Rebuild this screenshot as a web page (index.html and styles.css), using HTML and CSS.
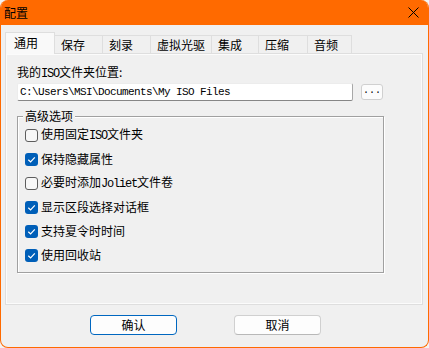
FILE: index.html
```html
<!DOCTYPE html>
<html lang="zh-CN">
<head>
<meta charset="utf-8">
<title>配置</title>
<link rel="stylesheet" href="styles.css">
</head>
<body>
<div class="window">
  <div class="titlebar">
    <span class="title">配置</span>
    <svg class="close" width="11" height="11" viewBox="0 0 11 11"><path d="M0.5 0.5 L10.5 10.5 M10.5 0.5 L0.5 10.5" stroke="#000" stroke-width="1" fill="none"/></svg>
  </div>
  <div class="tabs">
    <div class="tab active w50">通用</div>
    <div class="tab w47">保存</div>
    <div class="tab w48">刻录</div>
    <div class="tab w61">虚拟光驱</div>
    <div class="tab w47">集成</div>
    <div class="tab w49">压缩</div>
    <div class="tab w45 last">音频</div>
  </div>
  <div class="panel">
    <div class="label">我的<span class="lat">ISO</span>文件夹位置:</div>
    <div class="pathrow">
      <div class="input">C:\Users\MSI\Documents\My ISO Files</div>
      <div class="browse">...</div>
    </div>
    <div class="group">
      <div class="legend">高级选项</div>
      <div class="row"><span class="cb"></span><span>使用固定<span class="lat">ISO</span>文件夹</span></div>
      <div class="row"><span class="cb on"><svg width="13" height="13" viewBox="0 0 13 13"><path d="M3.3 6.8 L5.6 9 L9.8 4.4" stroke="#fff" stroke-width="1.2" fill="none"/></svg></span><span>保持隐藏属性</span></div>
      <div class="row"><span class="cb"></span><span>必要时添加<span class="lat">Joliet</span>文件卷</span></div>
      <div class="row"><span class="cb on"><svg width="13" height="13" viewBox="0 0 13 13"><path d="M3.3 6.8 L5.6 9 L9.8 4.4" stroke="#fff" stroke-width="1.2" fill="none"/></svg></span><span>显示区段选择对话框</span></div>
      <div class="row"><span class="cb on"><svg width="13" height="13" viewBox="0 0 13 13"><path d="M3.3 6.8 L5.6 9 L9.8 4.4" stroke="#fff" stroke-width="1.2" fill="none"/></svg></span><span>支持夏令时时间</span></div>
      <div class="row"><span class="cb on"><svg width="13" height="13" viewBox="0 0 13 13"><path d="M3.3 6.8 L5.6 9 L9.8 4.4" stroke="#fff" stroke-width="1.2" fill="none"/></svg></span><span>使用回收站</span></div>
    </div>
  </div>
  <div class="buttons">
    <div class="btn primary">确认</div>
    <div class="btn">取消</div>
  </div>
</div>
</body>
</html>
```
FILE: styles.css
```css
* { box-sizing: border-box; }
html, body {
  margin: 0;
  padding: 0;
  background: #f3f3f3;
}
body {
  font-family: "Noto Sans CJK SC", "Noto Sans", sans-serif;
  font-size: 12px;
  color: #000;
}
.window {
  width: 429px;
  height: 348px;
  background: #f0f0f0;
  border: 1px solid #ff6a00;
  border-top: none;
  border-radius: 8px;
  overflow: hidden;
  display: flex;
  flex-direction: column;
}
.titlebar {
  height: 25px;
  background: #ff6a00;
  display: flex;
  align-items: center;
  justify-content: space-between;
  padding: 0 10px 0 4px;
  margin: 0 -1px;
}
.title {
  line-height: 16px;
}
.close { display: block; }
.tabs {
  height: 28px;
  display: flex;
  align-items: flex-end;
  padding-left: 4px;
}
.tab {
  height: 18px;
  border: 1px solid #dedede;
  border-bottom: none;
  border-right: none;
  background: #f0f0f0;
  line-height: 16px;
  padding: 1px 0 0 6px;
}
.tab.last { border-right: 1px solid #dedede; }
.tab.active {
  height: 22px;
  margin-bottom: -1px;
  background: #f9f9f9;
  border-right: 1px solid #dedede;
  padding: 2px 0 0 8px;
  position: relative;
  z-index: 1;
}
.tab.active + .tab { border-left: none; }
.w50 { width: 50px; }
.w47 { width: 47px; }
.w48 { width: 48px; }
.w61 { width: 61px; }
.w49 { width: 49px; }
.w45 { width: 45px; }
.panel {
  margin-left: 4px;
  width: 418px;
  height: 252px;
  border: 1px solid #dedede;
  box-shadow: inset 1px 1px 0 #fbfbfb, inset -1px -1px 0 #fbfbfb;
  background: #f0f0f0;
  padding: 10px 0 0 11px;
}
.lat {
  font-family: "Liberation Mono", monospace;
  font-size: 12px;
  letter-spacing: -1.2px;
}
.label {
  line-height: 16px;
  height: 16px;
}
.pathrow {
  margin-top: 3px;
  display: flex;
  align-items: center;
}
.input {
  width: 336px;
  height: 18px;
  background: #fff;
  border: 1px solid #ececec;
  border-bottom-color: #868686;
  border-right-color: #a8a8a8;
  border-radius: 2px;
  font-family: "Liberation Mono", monospace;
  font-size: 11px;
  letter-spacing: -0.6px;
  line-height: 16px;
  padding-left: 2px;
  white-space: pre;
}
.browse {
  width: 22px;
  height: 16px;
  margin-left: 8px;
  background: #fcfcfc;
  border: 1px solid #d0d0d0;
  border-radius: 3px;
  font-family: "Liberation Mono", monospace;
  font-size: 10px;
  line-height: 12px;
  text-align: center;
}
.group {
  width: 367px;
  height: 157px;
  margin-top: 15px;
  border: 1px solid #a0a0a0;
  box-shadow: 1px 1px 0 #fff, inset 1px 1px 0 #fff;
  padding: 0 0 0 7px;
}
.legend {
  width: fit-content;
  height: 16px;
  line-height: 16px;
  margin: -9px 0 -1px -2px;
  padding: 0 2px;
  background: #f0f0f0;
}
.row {
  height: 24px;
  display: flex;
  align-items: center;
  gap: 3px;
  line-height: 16px;
}
.cb {
  width: 13px;
  height: 13px;
  border: 1px solid #5d5d5d;
  border-radius: 3px;
  background: #f7f7f7;
  flex: none;
}
.cb.on {
  border: none;
  background: #005fb8;
}
.cb svg { display: block; }
.buttons {
  display: flex;
  gap: 57px;
  margin-top: 10px;
  padding-left: 89px;
}
.btn {
  width: 87px;
  height: 20px;
  border: 1px solid #d0d0d0;
  border-bottom-color: #b8b8b8;
  border-radius: 4px;
  background: #fdfdfd;
  text-align: center;
  line-height: 17px;
}
.btn.primary {
  border-color: #0067c0;
}
```
